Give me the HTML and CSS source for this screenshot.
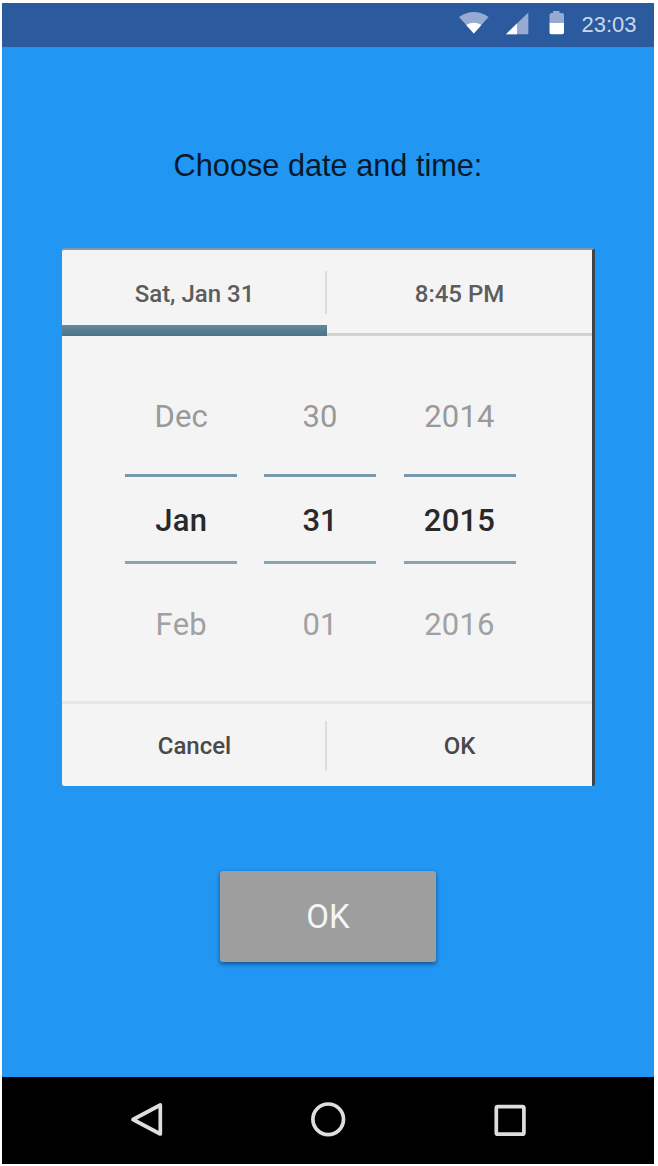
FILE: index.html
```html
<!DOCTYPE html>
<html lang="en">
<head>
<meta charset="utf-8">
<title>Choose date and time</title>
<link rel="stylesheet" href="styles.css">
</head>
<body>
<div class="phone">
  <header class="status">
    <svg class="status-icons" width="112" height="44" viewBox="0 0 112 44">
      <path d="M0 14Q14.800 4 29.600 14L14.800 30.500Z" fill="#96abd2"/>
      <path d="M7.200 22Q14.800 17.500 22.400 22L14.800 30.500Z" fill="#fff"/>
      <path d="M47 31.300L69.300 9.500V31.300Z" fill="#96abd2"/>
      <path d="M47 31.300L58 20.500V31.300Z" fill="#fff"/>
      <path d="M94 8h6.500v2H103q2 0 2 2v8H90.500v-8q0-2 2-2H94Z" fill="#96abd2"/>
      <path d="M90.500 20H105v9.500q0 1.800-1.800 1.800H92.300q-1.800 0-1.800-1.800Z" fill="#fff"/>
    </svg>
    <span class="clock">23:03</span>
  </header>
  <main class="screen">
    <h1 class="title">Choose date and time:</h1>
    <section class="dialog">
      <div class="tabs">
        <div class="tab tab-active">Sat, Jan 31</div>
        <div class="tab tab-time">8:45 PM</div>
      </div>
      <div class="pickers">
        <div class="picker month"><span class="prev">Dec</span><span class="current">Jan</span><span class="next">Feb</span></div>
        <div class="picker day"><span class="prev">30</span><span class="current">31</span><span class="next">01</span></div>
        <div class="picker year"><span class="prev">2014</span><span class="current">2015</span><span class="next">2016</span></div>
      </div>
      <div class="actions">
        <button class="action cancel">Cancel</button>
        <button class="action accept">OK</button>
      </div>
    </section>
    <button class="submit">OK</button>
  </main>
  <nav class="nav">
    <svg width="40" height="40" viewBox="0 0 40 40"><path d="M33.300 5V34L6 19.500Z"/></svg>
    <svg width="40" height="40" viewBox="0 0 40 40"><circle cx="20.200" cy="19.300" r="15.300"/></svg>
    <svg width="40" height="40" viewBox="0 0 40 40"><rect x="6.300" y="6.600" width="27.600" height="27.600" rx="1.500"/></svg>
  </nav>
</div>
</body>
</html>
```

FILE: styles.css
```css
* { box-sizing: border-box; }
body {
  margin: 0;
  padding: 3px 4px 2px 2px;
  background: #fff;
  font-family: Roboto, sans-serif;
}
button { border: 0; padding: 0; background: none; font-family: inherit; }
.phone {
  display: flex;
  flex-direction: column;
  height: 1161px;
  background: #2196f3;
}
.status {
  display: flex;
  justify-content: flex-end;
  align-items: center;
  height: 44px;
  padding-right: 18.500px;
  background: #2b5a9f;
}
.status-icons { margin-right: 11px; }
.clock {
  width: 54px;
  color: #ccd7e8;
  font: 22px/44px "Liberation Sans", Arial, sans-serif;
  white-space: nowrap;
}
.screen {
  display: flex;
  flex: 1;
  flex-direction: column;
  align-items: center;
}
.title {
  margin: 99px 0 0;
  color: #06192b;
  font: 400 30.700px/40px "Liberation Sans", Arial, sans-serif;
  white-space: nowrap;
}
.dialog {
  width: 533px;
  height: 538px;
  margin: 62px 0 0 1px;
  border-top: 2px solid #8598a8;
  border-right: 3px solid #3c454c;
  border-radius: 3px 3px 2px 2px;
  background: #f4f4f4;
}
.tabs {
  display: grid;
  grid-template-columns: 265px 1fr;
  height: 86px;
}
.tab {
  height: 86px;
  padding-top: 3px;
  color: #5c5c5c;
  font-size: 24px;
  font-weight: 500;
  line-height: 82px;
  text-align: center;
  background: linear-gradient(#d2d2d2, #d2d2d2) 0 83px / 100% 3px no-repeat;
}
.tab-active {
  background:
    linear-gradient(#dcdcdc, #dcdcdc) 263px 21px / 2px 43px no-repeat,
    linear-gradient(#64899a, #4b7386) 0 75px / 100% 11px no-repeat;
}
.pickers {
  display: grid;
  grid-template-columns: repeat(3, 112px);
  column-gap: 27.500px;
  height: 365px;
  padding: 28px 0 0 62.500px;
}
.picker {
  display: grid;
  grid-template-rows: 110px 90px 120px;
  font-size: 31px;
  text-align: center;
}
.prev {
  color: #999;
  line-height: 105px;
}
.current {
  border-top: 3.500px solid #7899ab;
  border-bottom: 3.500px solid #86a4b3;
  color: #292929;
  font-weight: 500;
  line-height: 88px;
}
.next { color: #a1a1a1; line-height: 122px; }
.month { letter-spacing: .2px; text-indent: 1.500px; }
.year { letter-spacing: .2px; }
.actions {
  display: grid;
  grid-template-columns: 265px 1fr;
  height: 85px;
  border-top: 3px solid #e7e7e7;
}
.action {
  padding-top: 2px;
  color: #494949;
  font-size: 24px;
  font-weight: 500;
}
.cancel { background: linear-gradient(#dcdcdc, #dcdcdc) 100% 17px / 2px 50px no-repeat; }
.submit {
  width: 216px;
  height: 91px;
  margin-top: 85px;
  border-radius: 3px;
  background: #9e9e9e;
  box-shadow: 0 2px 4px rgba(10, 45, 80, .65);
  color: #f5f5f5;
  font-size: 33px;
}
.nav {
  display: flex;
  justify-content: center;
  gap: 141.500px;
  align-items: center;
  height: 87.500px;
  background: #000;
}
.nav svg { fill: none; stroke: #dedede; stroke-width: 3.700; stroke-linejoin: round; }
```
